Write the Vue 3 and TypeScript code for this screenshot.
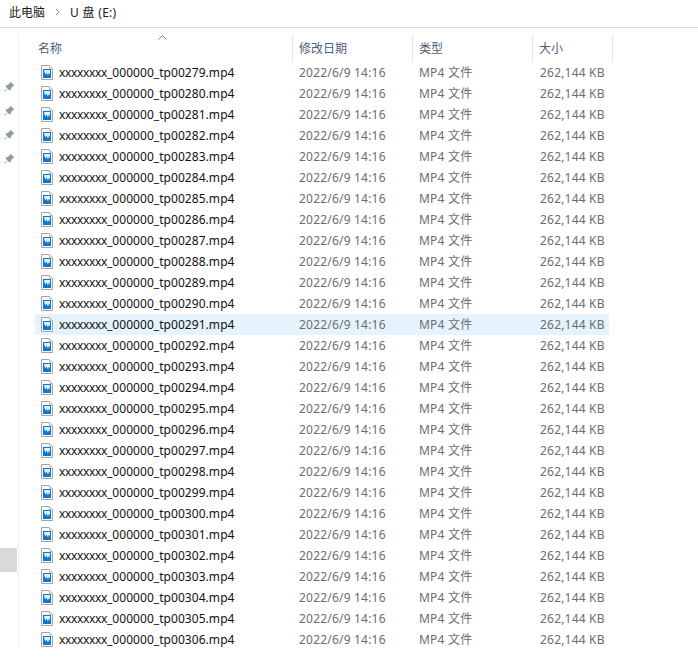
<script setup lang="ts">
interface FileRow {
  prefix: string
  name: string
  date: string
  type: string
  size: string
  selected: boolean
}

const files: FileRow[] = []
for (let n = 279; n <= 306; n++) {
  files.push({
    prefix: 'xxxxxxxx',
    name: `_000000_tp00${n}.mp4`,
    date: '2022/6/9 14:16',
    type: 'MP4 文件',
    size: '262,144 KB',
    selected: n === 291
  })
}

const pins = [1, 2, 3, 4]
</script>

<template>
  <div class="explorer">
    <div class="crumbs">
      <span>此电脑</span>
      <svg class="chevron" width="5" height="8" viewBox="0 0 5 8">
        <path d="M1 1l3 3-3 3" fill="none" stroke="#8a8a8a" stroke-width="1" />
      </svg>
      <span class="drive">U 盘 (E:)</span>
    </div>
    <div class="body">
      <aside class="side">
        <svg v-for="p in pins" :key="p" class="pin" width="11" height="11" viewBox="0 0 11 11">
          <path d="M6.5 .8l3.700 3.700-1.100 .6-2 2-.3 2-1.200 .3-4-4 .4-1.200 2-.3 2-2z" fill="#8d99a5" />
          <path d="M3 7.600L.8 10.200" stroke="#8d99a5" stroke-width="1" fill="none" />
        </svg>
        <div class="side-thumb"></div>
      </aside>
      <main class="list">
        <div class="head">
          <div class="col-name">
            名称
            <svg class="sort" width="9" height="5" viewBox="0 0 9 5">
              <path d="M.5 4.500l4-4 4 4" fill="none" stroke="#7d7d7d" stroke-width="1" />
            </svg>
          </div>
          <div class="col-date">修改日期</div>
          <div class="col-type">类型</div>
          <div class="col-size">大小</div>
        </div>
        <div v-for="f in files" :key="f.name" class="row" :class="{ selected: f.selected }">
          <div class="cell-name">
            <svg class="file-icon" width="12" height="15" viewBox="0 0 12 15">
              <path d="M.5 .5h8l3 3v11h-11z" fill="#fff" stroke="#a3a3a3" />
              <path d="M8.500 .5v3h3" fill="#e8e8e8" stroke="#c4c4c4" />
              <rect x="2" y="4" width="8" height="9" fill="#0a78d7" />
              <path d="M3 5h6v4.500l-1-2-1 3-1.500-3-1 2-1-2z" fill="#e4f1fb" />
            </svg>
            <span><span class="name-prefix">{{ f.prefix }}</span>{{ f.name }}</span>
          </div>
          <div class="cell">{{ f.date }}</div>
          <div class="cell">{{ f.type }}</div>
          <div class="cell">{{ f.size }}</div>
        </div>
      </main>
    </div>
  </div>
</template>

<style>
html,
body {
  background: #fff;
}
</style>

<style scoped>
.explorer {
  width: 698px;
  height: 659px;
  overflow: hidden;
  background: #fff;
  font-family: "Noto Sans", "Noto Sans CJK SC", sans-serif;
  font-size: 12px;
}

.crumbs {
  height: 28px;
  box-sizing: border-box;
  display: flex;
  align-items: center;
  gap: 10px;
  padding: 0 0 3px 9px;
  color: #1a1a1a;
  border-bottom: 1px solid #dcdcdc;
}

.drive {
  letter-spacing: 0.3px;
}

.body {
  display: flex;
  padding-top: 7px;
}

.side {
  width: 19px;
  height: 612px;
  box-sizing: border-box;
  border-right: 1px solid #efefef;
  display: flex;
  flex-direction: column;
  align-items: flex-start;
  padding: 46px 0 0 4px;
  gap: 13px;
}

.pin {
  display: block;
}

.side-thumb {
  width: 17px;
  height: 24px;
  background: #d9d9d9;
  margin: 371px 0 0 -4px;
}

.list {
  padding-left: 16px;
  width: 574px;
}

.head {
  height: 27px;
  display: grid;
  grid-template-columns: 258px 120px 120px 80px;
  width: 578px;
  color: #4c607a;
}

.head > div {
  display: flex;
  align-items: center;
  padding-left: 6px;
  padding-bottom: 1px;
  border-right: 1px solid #e5e5e5;
  position: relative;
}

.head > .col-name {
  padding-left: 3px;
}

.sort {
  position: absolute;
  left: 123px;
  top: 0;
}

.row {
  height: 21px;
  width: 574px;
  display: grid;
  grid-template-columns: 258px 120px 121px 75px;
  align-items: center;
  line-height: 20px;
  color: #6d6d6d;
}

.row.selected {
  background: #e5f3ff;
}

.cell-name {
  display: flex;
  align-items: center;
  gap: 6px;
  padding-left: 6px;
  color: #111;
  letter-spacing: 0.05px;
}

.name-prefix {
  letter-spacing: -0.35px;
}

.file-icon {
  flex: none;
}

.cell {
  padding-left: 6px;
  white-space: nowrap;
  letter-spacing: 0.2px;
}
</style>
